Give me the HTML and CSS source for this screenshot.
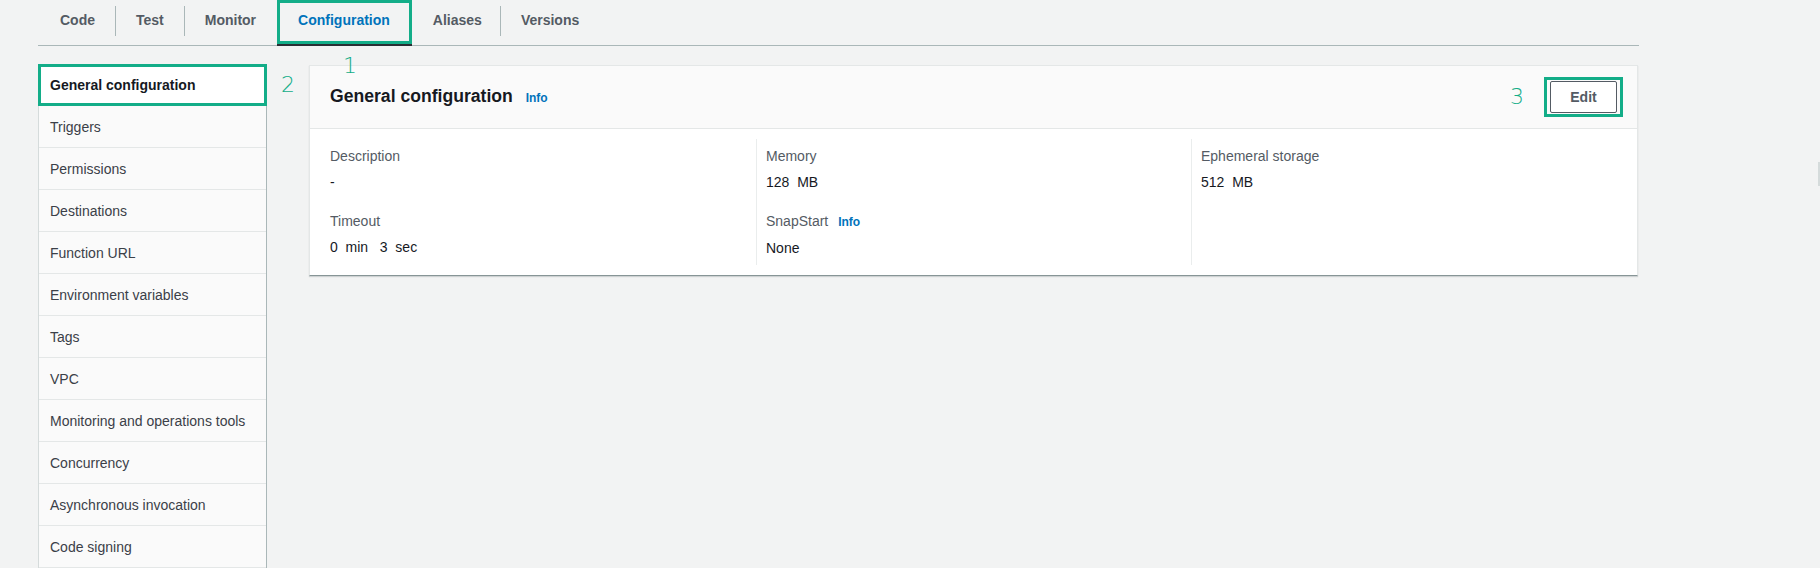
FILE: index.html
```html
<!DOCTYPE html>
<html lang="en">
<head>
<meta charset="utf-8">
<title>Configuration</title>
<link rel="stylesheet" href="styles.css">
</head>
<body>
<div class="page">
  <nav class="tabs">
    <div class="tab">Code</div>
    <div class="tab sep">Test</div>
    <div class="tab sep">Monitor</div>
    <div class="tab active annot">Configuration<span class="num num1">1</span></div>
    <div class="tab tight">Aliases</div>
    <div class="tab sep">Versions</div>
  </nav>
  <div class="main">
    <aside class="sidenav">
      <div class="nav-item current annot">General configuration<span class="num num2">2</span></div>
      <div class="nav-item">Triggers</div>
      <div class="nav-item">Permissions</div>
      <div class="nav-item">Destinations</div>
      <div class="nav-item">Function URL</div>
      <div class="nav-item">Environment variables</div>
      <div class="nav-item">Tags</div>
      <div class="nav-item">VPC</div>
      <div class="nav-item">Monitoring and operations tools</div>
      <div class="nav-item">Concurrency</div>
      <div class="nav-item">Asynchronous invocation</div>
      <div class="nav-item">Code signing</div>
    </aside>
    <section class="card">
      <header class="card-head">
        <h2 class="card-title">General configuration <a class="info">Info</a></h2>
        <div class="actions">
          <span class="num num3">3</span>
          <div class="edit-wrap annot-box"><button class="btn">Edit</button></div>
        </div>
      </header>
      <div class="card-body">
        <div class="col">
          <div class="field">
            <div class="label">Description</div>
            <div class="value">-</div>
          </div>
          <div class="field">
            <div class="label">Timeout</div>
            <div class="value">0  min   3  sec</div>
          </div>
        </div>
        <div class="col divided">
          <div class="field">
            <div class="label">Memory</div>
            <div class="value">128  MB</div>
          </div>
          <div class="field">
            <div class="label">SnapStart <a class="info">Info</a></div>
            <div class="value">None</div>
          </div>
        </div>
        <div class="col divided">
          <div class="field">
            <div class="label">Ephemeral storage</div>
            <div class="value">512  MB</div>
          </div>
        </div>
      </div>
    </section>
  </div>
</div>
<div class="edge-tab"></div>
</body>
</html>
```
FILE: styles.css
```css
html, body {
  margin: 0;
  padding: 0;
}
body {
  background: #f2f3f3;
  font-family: "Liberation Sans", Arial, sans-serif;
  font-size: 14px;
  color: #16191f;
  overflow: hidden;
  height: 568px;
  position: relative;
}
.page {
  margin-left: 38px;
  width: 1601px;
}
.tabs {
  display: flex;
  height: 45px;
  border-bottom: 1px solid #aab7b8;
  padding-left: 2px;
}
.tab {
  position: relative;
  height: 44px;
  box-sizing: border-box;
  padding: 0 20px 4px;
  display: flex;
  align-items: center;
  font-weight: bold;
  color: #545b64;
  margin-right: 1px;
}
.tab.tight {
  padding-right: 18px;
}
.tab.sep::before {
  content: "";
  position: absolute;
  left: -1px;
  top: 6px;
  height: 30px;
  border-left: 1px solid #aab7b8;
}
.tab.active {
  color: #0073bb;
  padding: 0 22px 4px 21px;
}
.tab.active::after {
  content: "";
  position: absolute;
  left: 0;
  right: 0;
  bottom: -2px;
  height: 2px;
  background: #2a2e33;
}
.annot {
  outline: 3px solid #13ad88;
  outline-offset: -3px;
}
.num {
  position: absolute;
  font-family: "DejaVu Sans", sans-serif;
  font-weight: 200;
  font-size: 22px;
  line-height: 22px;
  color: #13ad88;
}
.num1 {
  left: 66px;
  top: 55px;
}
.num2 {
  left: 241px;
  top: 10px;
}
.main {
  display: flex;
  align-items: flex-start;
  margin-top: 18px;
  gap: 42px;
}
.sidenav {
  width: 229px;
  flex: none;
  box-sizing: border-box;
  border-left: 1px solid #d5dbdb;
  border-right: 1px solid #aab7b8;
  background: #fafafa;
}
.nav-item {
  position: relative;
  height: 41px;
  border-bottom: 1px solid #e4e7e7;
  display: flex;
  align-items: center;
  padding-left: 11px;
  color: #3b4048;
}
.nav-item.current {
  background: #fff;
  font-weight: bold;
  color: #16191f;
  margin-left: -1px;
  margin-right: -1px;
  padding-left: 10px;
  border-left: 2px solid #0073bb;
}
.card {
  width: 1329px;
  flex: none;
  box-sizing: border-box;
  margin-top: 1px;
  background: #fff;
  border: 1px solid #e4e7e7;
  border-bottom: 1px solid #879596;
  box-shadow: 0 1px 1px rgba(0, 28, 36, 0.15);
}
.card-head {
  height: 63px;
  box-sizing: border-box;
  background: #fafafa;
  border-bottom: 1px solid #e4e7e7;
  display: flex;
  align-items: center;
  justify-content: space-between;
  padding: 0 14px 2px 20px;
}
.card-title {
  margin: 0;
  font-size: 17.6px;
  font-weight: bold;
  color: #16191f;
}
.info {
  font-size: 12px;
  font-weight: bold;
  color: #0073bb;
  margin-left: 8px;
  text-decoration: none;
}
.actions {
  position: relative;
  display: flex;
  align-items: center;
  margin-top: 2px;
}
.num3 {
  position: absolute;
  left: -34px;
  top: 9px;
}
.annot-box {
  border: 3px solid #13ad88;
  padding: 1px 3px;
}
.btn {
  width: 67px;
  height: 32px;
  box-sizing: border-box;
  border: 1px solid #545b64;
  border-radius: 2px;
  background: #fff;
  font-family: "Liberation Sans", Arial, sans-serif;
  font-size: 14px;
  font-weight: bold;
  color: #545b64;
  display: block;
}
.card-body {
  display: grid;
  grid-template-columns: 426px 435px 1fr;
  padding: 10px 20px 10px;
}
.col {
  padding: 7px 0 7px;
}
.col.divided {
  border-left: 1px solid #eaeded;
  padding-left: 9px;
}
.field + .field {
  margin-top: 19px;
}
.label {
  line-height: 20px;
  color: #545b64;
}
.label .info {
  margin-left: 6px;
}
.value {
  line-height: 20px;
  margin-top: 6px;
  white-space: pre;
  color: #16191f;
}
.edge-tab {
  position: absolute;
  right: 0;
  top: 162px;
  width: 2px;
  height: 24px;
  background: #d5dbdb;
}
```
